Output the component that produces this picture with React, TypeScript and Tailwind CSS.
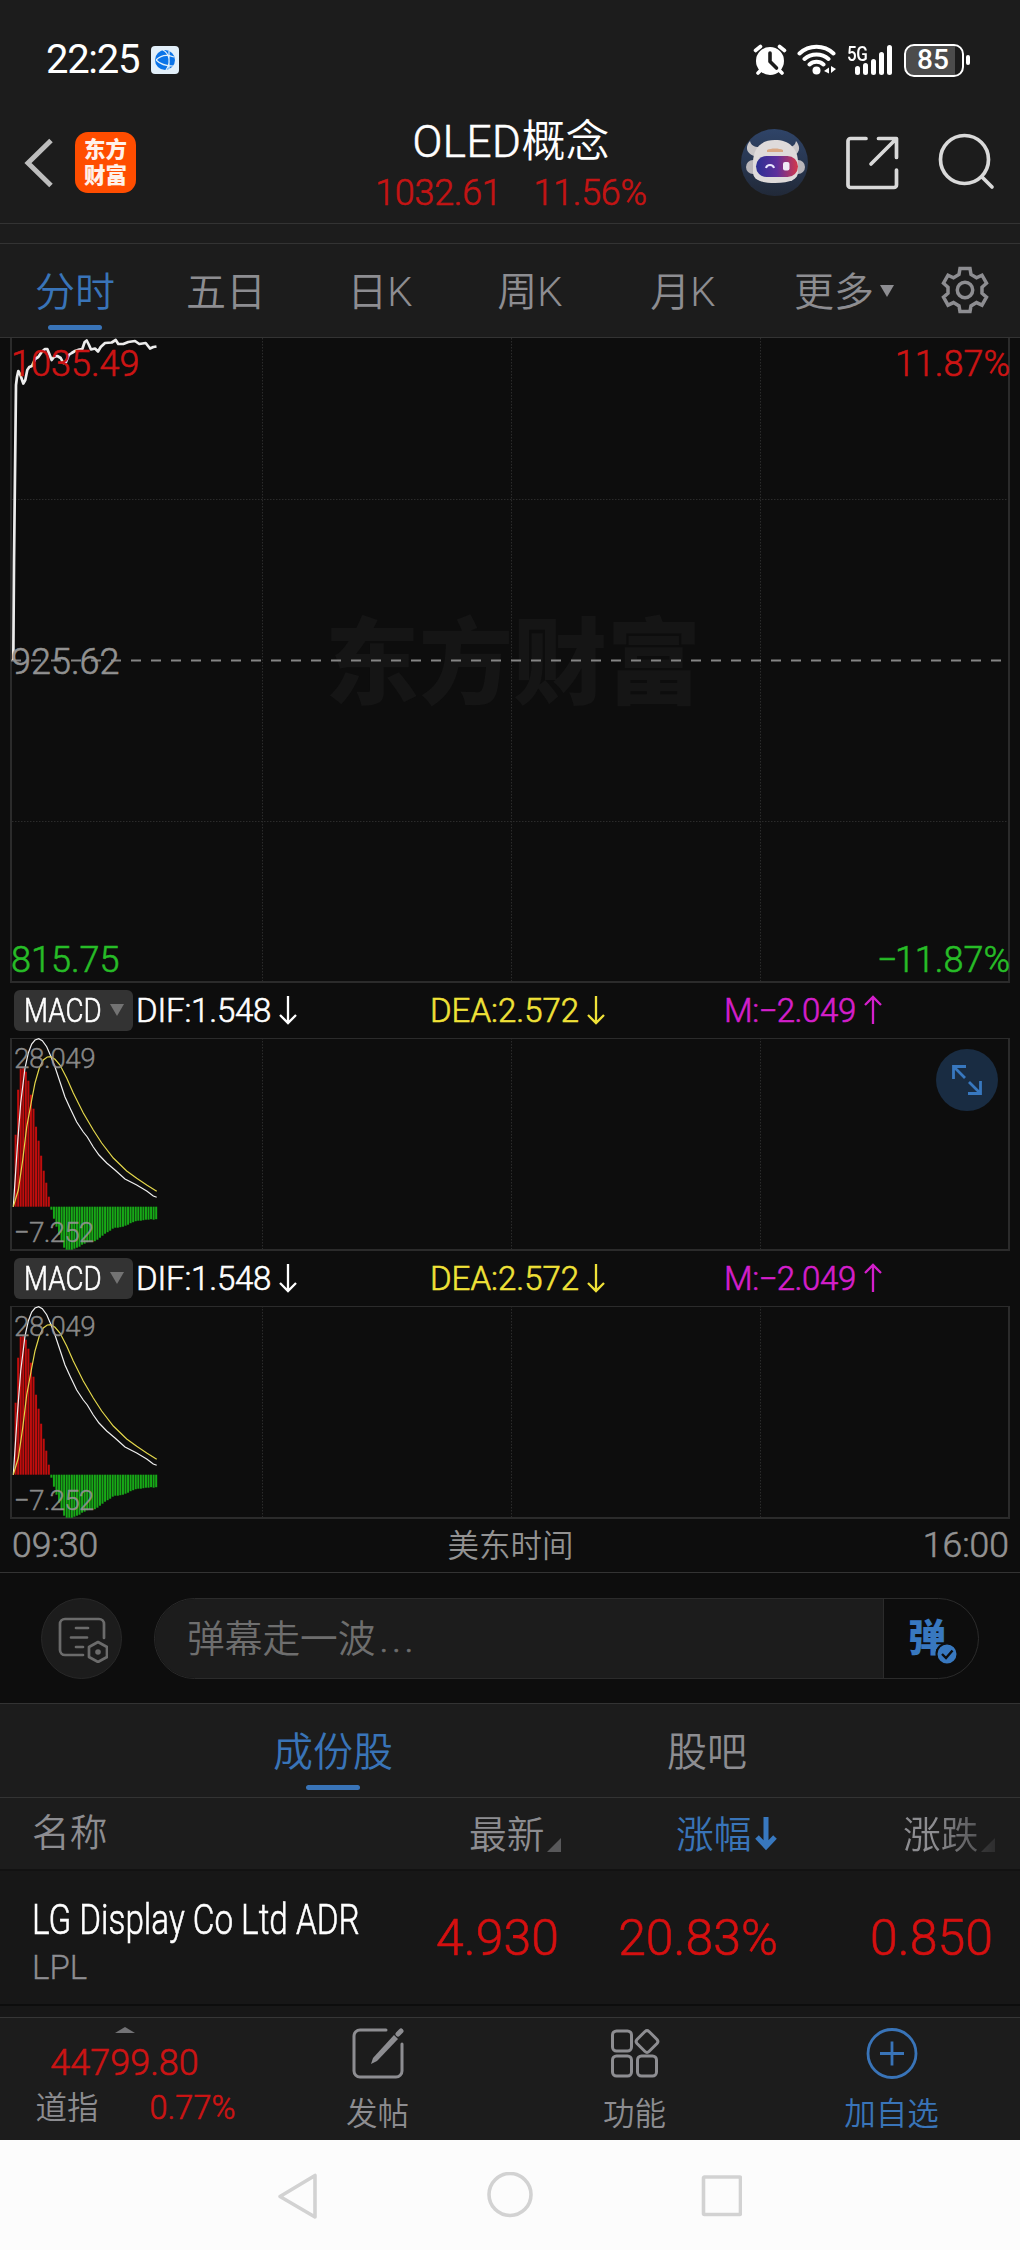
import type { ReactNode } from "react";
import { clsx } from "clsx";

// Stock board detail screen: status bar, quote header, intraday chart with two
// MACD panes, comment bar, constituents table and the bottom action bar.

const PERIODS = [
  { label: "分时", width: "w-[150px]", active: true },
  { label: "五日", width: "w-[152px]" },
  { label: "日K", width: "w-[156px]" },
  { label: "周K", width: "w-[144px]" },
  { label: "月K", width: "w-[162px]" },
];

// Light latin digits read too thin next to the CJK labels, so they get a hairline.
const NUM = "[-webkit-text-stroke:0.6px]";

const PRICE =
  "13.3,322 14,225 16,47 17,39 18.3,33 20,36 23.3,45.5 25.3,42 27.3,32 29.3,29 32,28 35,21 38.3,19 41.7,14 45,11 47.3,11 49.3,16 51.7,22 54,19 57.3,18 60.7,20 63.3,25 66,24 68.7,17 71.7,15 75,13 79.3,11.5 82.3,11 84.7,4 86.7,2.5 89,7 91,11.5 95,10.5 98,13.5 100.7,9 105,5 111.7,4.5 115.7,2 118.3,6 123.3,6 128.3,4 135,3 139.3,6 145.7,5 150,10.5 153.3,9 156.5,8.5";

const DIF =
  "13.3,168.7 17.3,109 20.7,65 25,30 28.3,15 31.7,6 35,2 38.7,0.7 42.3,2.7 46.7,8.7 50.7,18 55,29 60,44 65,59 70,70 76.7,84 83.3,94 87.3,99 93.3,109 99,117 106.7,125 115,132 125,141 136.7,147 146.7,153 153.3,158 156.7,159.3";

const DEA =
  "13.3,168.7 18.3,152 22.7,122 26.7,89 31.7,62 35,45 39.3,30 43.3,22 47.3,19 50.7,18.7 55,21.3 60,27 66.7,40 73.3,55 83.3,75 93.3,92 101.7,105 113.3,120 126.7,133 136.7,140.3 146.7,147 156.7,153.3";

const HIST = [
  72, 117, 138, 138.5, 135, 126, 112, 98, 80, 66, 51, 36, 24, 10, -3, -12, -20, -28, -35, -41, -43, -43,
  -43, -42, -41, -40, -38, -37, -35.5, -34.5, -34.5, -34.5, -33, -31, -29, -27, -25.5, -24, -22, -21, -21,
  -20.5, -20, -19, -18, -16.5, -15.5, -14.5, -14, -14, -13.5, -13, -13, -12.5, -13, -12.5,
];

export default function App() {
  return (
    <div className="flex h-[2250px] w-[1020px] flex-col overflow-hidden bg-[#0d0d0d] font-['Roboto','Noto_Sans_CJK_SC',sans-serif] leading-none font-[350] text-[#8d8d91]">
      <StatusBar />
      <Header />
      <div className="h-5 shrink-0 border-b border-[#333] bg-[#1c1c1c]" />
      <PeriodTabs />
      <PricePane />
      <MacdHeader />
      <MacdPane expandable />
      <MacdHeader />
      <MacdPane />
      <div className="flex h-[54px] shrink-0 items-center justify-between border-b border-[#333] pt-px pr-[11px] pl-3 text-[#929292]">
        <span className={clsx("w-[120px] text-[35.5px]", NUM)}>09:30</span>
        <span className="pt-0.5 text-[31.5px]">美东时间</span>
        <span className={clsx("w-[120px] text-right text-[35.5px]", NUM)}>16:00</span>
      </div>
      <CommentBar />
      <BoardTabs />
      <StockTable />
      <ActionBar />
      <SystemNav />
    </div>
  );
}

function StatusBar() {
  return (
    <div className="flex h-[120px] shrink-0 items-center bg-[#1c1c1c] pl-[46px] text-white">
      <span className="w-[105px] text-[40px] font-normal tracking-[-1.3px]">22:25</span>
      <svg width="28" height="28" viewBox="0 0 28 28">
        <rect width="28" height="28" rx="4" fill="#e3f0fa" />
        <circle cx="14" cy="14" r="10" fill="#0b74e8" />
        <path d="M5 14c5-5 11-6 18-3M5 14c4 4 9 6 17 6M12 4c7 4 8 13 3 20M18 5v18" fill="none" stroke="#e3f0fa" strokeWidth="1.2" />
      </svg>
      <div className="ml-[574px] flex items-center">
        <svg width="34" height="32" viewBox="0 0 34 32">
          <circle cx="17" cy="17" r="14" fill="#fff" />
          <path d="M2.500 6.500 7.500 2.500M26.500 2.500 31.500 6.500M8 26l-3 3M26 26l3 3" stroke="#fff" strokeWidth="3.600" strokeLinecap="round" />
          <path d="M17 9v8.500l6.500 6.500" fill="none" stroke="#1c1c1c" strokeWidth="3.600" strokeLinecap="round" strokeLinejoin="round" />
        </svg>
        <svg className="ml-2.5" width="40" height="32" viewBox="0 0 40 32" fill="none" stroke="#fff" strokeWidth="4" strokeLinecap="round">
          <path d="M2.500 9.500a25 25 0 0 1 34 0M7.500 15a18 18 0 0 1 24 0M12.500 20.500a10.500 10.500 0 0 1 14 0" />
          <circle cx="19.500" cy="26.500" r="4" fill="#fff" stroke="none" />
          <path d="M32 23.500v6l-5-2.500zM34 22v7l5-4z" fill="#fff" stroke="none" />
        </svg>
        <div className="ml-2.5 flex h-[32px] w-[46px]">
          <span className="-mr-[14px] h-4 w-[22px] origin-left scale-x-[0.85] text-[20px] font-medium tracking-[-0.5px]">5G</span>
          <div className="flex items-end gap-[3px] pb-px">
            <i className="h-[9px] w-[5px] rounded-full bg-white" />
            <i className="h-[12px] w-[5px] rounded-full bg-white" />
            <i className="h-[16px] w-[5px] rounded-full bg-white" />
            <i className="h-[23px] w-[5px] rounded-full bg-white" />
            <i className="h-[30px] w-[5px] rounded-full bg-white" />
          </div>
        </div>
        <div className="ml-[11px] flex items-center gap-0.5">
          <div className="flex h-[33px] w-[60px] items-center justify-center rounded-[10px] border-2 border-white bg-[linear-gradient(90deg,#4c4c4c_88%,transparent_88%)] text-[28px] font-medium">
            <span className="pr-0.5">85</span>
          </div>
          <i className="h-[10px] w-1 rounded-full bg-white" />
        </div>
      </div>
    </div>
  );
}

function Header() {
  return (
    <div className="flex h-[104px] shrink-0 border-b border-[#333] bg-[#1c1c1c]">
      <div className="flex w-[340px] pt-3 pl-6">
        <svg className="mt-[6px]" width="30" height="50" viewBox="0 0 30 50" fill="none">
          <path d="M27 2.500 4 25l23 22.500" stroke="#bdbdbd" strokeWidth="5" />
        </svg>
        <div className="ml-[21px] flex size-[61px] flex-col items-center justify-center gap-[5px] rounded-[13px] bg-[#ff4d00] text-[21.5px] font-black text-[#fff1ea]">
          <span>东方</span>
          <span>财富</span>
        </div>
      </div>
      <div className="flex w-[342px] flex-col items-center">
        <h1 className="text-[44px] text-white">
          <span className={clsx("tracking-[0.5px]", NUM)}>OLED</span>概念
        </h1>
        <p className={clsx("mt-[11px] flex gap-[32px] text-[36px] tracking-[-0.3px] text-[#c41414]", NUM)}>
          <span>1032.61</span>
          <span>11.56%</span>
        </p>
      </div>
      <div className="flex flex-1 pt-[9px] pl-[59px]">
        <RobotAvatar />
        <svg className="mt-[6px] ml-[37px]" width="56" height="56" viewBox="0 0 56 56" fill="none" stroke="#d9d9d9" strokeWidth="3.700" strokeLinecap="round" strokeLinejoin="round">
          <path d="M21 3.500H5.500a2.500 2.500 0 0 0-2.500 2.500v44a2.500 2.500 0 0 0 2.500 2.500h43.500a2.500 2.500 0 0 0 2.500-2.500V35M33.500 3.500h18v19M50 5 26 29" />
        </svg>
        <svg className="mt-[4px] ml-[37px]" width="58" height="58" viewBox="0 0 58 58" fill="none" stroke="#d9d9d9" strokeWidth="3.700" strokeLinecap="round">
          <circle cx="26.500" cy="26.500" r="24" />
          <path d="m44 44 10 10" />
        </svg>
      </div>
    </div>
  );
}

function RobotAvatar() {
  return (
    <svg width="67" height="67" viewBox="0 0 67 67">
      <defs>
        <linearGradient id="sky" x1="0" y1="0" x2="0" y2="1">
          <stop offset="0" stopColor="#2f4468" />
          <stop offset="1" stopColor="#212938" />
        </linearGradient>
        <linearGradient id="visor">
          <stop offset="0" stopColor="#2b2f93" />
          <stop offset="0.500" stopColor="#5d2f9c" />
          <stop offset="1" stopColor="#d5394a" />
        </linearGradient>
      </defs>
      <circle cx="33.500" cy="33.500" r="33.500" fill="url(#sky)" />
      <path d="M9 12c-5 6-4 12 4 15l5-9c-5 0-8-2-9-6zM55 12c5 6 4 12-3 15l-5-9c5 0 7-2 8-6z" fill="#c9c6c8" />
      <circle cx="12" cy="38" r="7" fill="#b9b6ba" />
      <circle cx="57" cy="38" r="7" fill="#b9b6ba" />
      <path d="M12 34c0-15 8-23 22-23s23 8 23 23v9c0 7-7 11-23 11s-22-4-22-11z" fill="#dedada" />
      <path d="M26 21c4-2 12-2 16 0v2H26z" fill="#d9a783" />
      <rect x="15" y="27" width="42" height="21" rx="10.500" fill="url(#visor)" />
      <path d="M25 39c1-4 7-4 8 0" fill="none" stroke="#e8e6ff" strokeWidth="2" />
      <rect x="42" y="33" width="6.500" height="8.500" rx="2" fill="#efeaf5" />
    </svg>
  );
}

function PeriodTabs() {
  return (
    <div className="flex h-[94px] shrink-0 border-b border-[#333] bg-[#1c1c1c] text-[40px]">
      {PERIODS.map((p) => (
        <div key={p.label} className={clsx("flex flex-col items-center pt-[29px]", p.width, p.active && "text-[#3974b8]")}>
          <span>{p.label}</span>
          {p.active && <i className="mt-[12px] h-[5px] w-[54px] rounded-full bg-[#3974b8]" />}
        </div>
      ))}
      <div className="flex items-start pt-[29px] pl-[30px]">
        <span>更多</span>
        <svg className="mt-[12px] ml-[6px]" width="14" height="12" viewBox="0 0 14 12">
          <path d="M0 0h14L7 12z" fill="#8d8d91" />
        </svg>
      </div>
      <svg className="mt-[22px] ml-[47px]" width="48" height="48" viewBox="0 0 48 48" fill="none" stroke="#8d8d91" strokeWidth="3.500">
        <path d="M19 2.500h10l1 6 5.500 3.300 5.500-2.600 4.500 8-4.500 4v6l4.500 4-4.500 8-5.500-2.600-5.500 3.300-1 5.600H19l-1-5.600-5.500-3.300L7 39.200l-4.500-8 4.500-4v-6l-4.500-4 4.500-8 5.500 2.600L18 8.500z" />
        <circle cx="24" cy="24" r="7.700" />
      </svg>
    </div>
  );
}

function GridLines({ height }: { height: number }) {
  return (
    <g stroke="#2b2b2b" strokeWidth="1" strokeDasharray="1.500 1.500">
      {[262.5, 511.5, 760.5].map((x) => (
        <path key={x} d={`M${x} 0V${height}`} />
      ))}
    </g>
  );
}

function PricePane() {
  return (
    <div className="relative h-[645px] shrink-0">
      <div className="absolute top-[280px] left-[325px] text-[94px] font-black text-[#151515]">东方财富</div>
      <svg className="absolute inset-0" width="1020" height="645" viewBox="0 0 1020 645" fill="none">
        <GridLines height={643} />
        <path d="M12 161.500H1008M12 483.500H1008" stroke="#2b2b2b" strokeDasharray="1.500 1.500" />
        <path d="M11 0V644H1009V0" stroke="#2b2b2b" strokeWidth="2" />
        <path d="M11 322.500H1004" stroke="#858585" strokeWidth="2" strokeDasharray="10 10" />
        <polyline points={PRICE} stroke="#ececec" strokeWidth="2.700" strokeLinejoin="round" />
      </svg>
      <div className={clsx("absolute inset-0 flex flex-col justify-between pt-[8px] pr-[10px] pb-[5px] pl-[11px] text-[36px]", NUM)}>
        <div className="flex justify-between text-[#cc1414]">
          <span>1035.49</span>
          <span>11.87%</span>
        </div>
        <span className="text-[#929292]">925.62</span>
        <div className="flex justify-between text-[#27bd27]">
          <span>815.75</span>
          <span className="flex">
            <Minus />
            11.87%
          </span>
        </div>
      </div>
    </div>
  );
}

function Arrow({ up = false }: { up?: boolean }) {
  return (
    <svg
      className={clsx("ml-2", up && "rotate-180")}
      width="18"
      height="30"
      viewBox="0 0 18 30"
      fill="none"
      stroke="currentColor"
      strokeWidth="2.300"
    >
      <path d="M9 1v27M1 20l8 8 8-8" />
    </svg>
  );
}

function MacdHeader() {
  return (
    <div className={clsx("flex h-[55px] shrink-0 items-center pb-px pl-3.5 text-[33px]", NUM)}>
      <div className="flex h-[41px] w-[119px] items-center rounded-[6px] bg-[#333] pl-[10px] text-white">
        <span className="w-[86px] origin-left scale-x-[0.84]">MACD</span>
        <svg width="14" height="12" viewBox="0 0 14 12">
          <path d="M0 0h14L7 12z" fill="#737373" />
        </svg>
      </div>
      <div className="flex w-[293px] items-center pl-[3px] tracking-[-0.2px] text-white">
        DIF:1.548
        <Arrow />
      </div>
      <div className="flex w-[298px] items-center pl-1 text-[#f0e238]">
        DEA:2.572
        <Arrow />
      </div>
      <div className="flex items-center tracking-[-0.4px] text-[#d41fcb]">
        M:
        <Minus />
        2.049
        <Arrow up />
      </div>
    </div>
  );
}

function Minus() {
  return <span className="inline-block w-[18px]">−</span>;
}

function MacdPane({ expandable = false }: { expandable?: boolean }) {
  return (
    <div className="relative h-[213px] shrink-0">
      <svg className="absolute inset-0" width="1020" height="213" viewBox="0 0 1020 213" fill="none">
        <GridLines height={211} />
        <path d="M11 0.500H1009" stroke="#2b2b2b" />
        <path d="M11 0V212H1009V0" stroke="#2b2b2b" strokeWidth="2" />
        {HIST.map((v, i) => (
          <rect
            key={i}
            x={14.6 + i * 2.556}
            y={v > 0 ? 168.7 - v : 168.7}
            width="2"
            height={Math.abs(v)}
            fill={v > 0 ? "#c00d0d" : "#17a817"}
          />
        ))}
        <polyline points={DIF} stroke="#f0f0f0" strokeWidth="1.200" />
        <polyline points={DEA} stroke="#e2d64a" strokeWidth="1.200" />
      </svg>
      <div className="absolute inset-y-0 left-[14px] flex flex-col justify-between pt-[7px] pb-[4px] text-[28px] text-[#949494]/90 [-webkit-text-stroke:0.4px]">
        <span className="tracking-[-0.5px]">28.049</span>
        <span className="tracking-[-0.9px]">−7.252</span>
      </div>
      {expandable && (
        <div className="absolute top-[11px] right-[22px] flex size-[62px] items-center justify-center rounded-full bg-[#192c42]">
          <svg width="30" height="30" viewBox="0 0 30 30" fill="none" stroke="#3878bf" strokeWidth="2.800">
            <path d="M14 1.500H1.500V14M1.500 1.500 13 13M16 28.500h12.500V16M28.500 28.500 17 17" />
          </svg>
        </div>
      )}
    </div>
  );
}

function CommentBar() {
  return (
    <div className="flex h-[131px] shrink-0 items-center border-b border-[#333] pl-[41px]">
      <div className="flex size-[81px] items-center justify-center rounded-full border border-[#282828] bg-[#1c1c1c]">
        <svg className="mt-[3px] ml-[3px]" width="50" height="46" viewBox="0 0 50 46" fill="none" stroke="#6b6b6b" strokeWidth="2.700" strokeLinecap="round">
          <path d="M25 38H7a5 5 0 0 1-5-5V7a5 5 0 0 1 5-5h34a5 5 0 0 1 5 5v14M18 11h12M13 20.500h16M18 30h7" />
          <path d="m40 25 9 5v10l-9 5-9-5V30z" strokeLinejoin="round" />
          <circle cx="40" cy="35" r="2.800" fill="#6b6b6b" stroke="none" />
        </svg>
      </div>
      <div className="ml-8 flex h-[81px] w-[825px] overflow-hidden rounded-full border border-[#2b2b2b]">
        <div className="flex w-[729px] items-center border-r border-[#2b2b2b] bg-[#1c1c1c] pt-1 pl-[32px] text-[37.7px] text-[#6e6e6e]">
          弹幕走一波<span className={clsx("pl-1 tracking-[3.500px]", NUM)}>...</span>
        </div>
        <div className="relative flex items-center pl-6 text-[38px] font-black text-[#3878bf]">
          弹
          <svg className="absolute top-[43px] left-[51px]" width="24" height="24" viewBox="0 0 24 24">
            <circle cx="12" cy="12" r="10.500" fill="#3878bf" stroke="#0d0d0d" strokeWidth="2" />
            <path d="m7 12 4 4 6.500-7.500" fill="none" stroke="#0d0d0d" strokeWidth="2.400" />
          </svg>
        </div>
      </div>
    </div>
  );
}

function BoardTabs() {
  return (
    <div className="flex h-[94px] shrink-0 justify-center border-b border-[#333] bg-[#1c1c1c] pl-5 text-[40px]">
      <div className="flex w-[374px] flex-col items-center pt-[29px] text-[#3974b8]">
        <span>成份股</span>
        <i className="mt-[12px] h-[5px] w-[54px] rounded-full bg-[#3974b8]" />
      </div>
      <div className="flex w-[374px] flex-col items-center pt-[29px]">
        <span>股吧</span>
      </div>
    </div>
  );
}

function Corner() {
  return (
    <svg className="mt-[20px] ml-[3px]" width="14" height="14" viewBox="0 0 14 14">
      <path d="M14 0v14H0z" fill="#58585a" />
    </svg>
  );
}

function StockTable() {
  return (
    <div className="shrink-0 bg-[#171717]">
      <div className="flex h-[73px] items-center border-b-2 border-[#121212] bg-[#1c1c1c] pt-[4px] pl-[32px] text-[37.7px]">
        <span className="w-[437px] pb-[3px]">名称</span>
        <span className="flex w-[207px] items-center">
          最新
          <Corner />
        </span>
        <span className="flex w-[227px] items-center text-[#3974b8]">
          涨幅
          <svg className="mb-[3px] ml-1" width="22" height="34" viewBox="0 0 22 34" fill="none" stroke="#3878bf" strokeWidth="5">
            <path d="M11 0v30M2 20l9 9.500 9-9.500" />
          </svg>
        </span>
        <span className="flex items-center [mask-image:linear-gradient(90deg,#000_35%,rgba(0,0,0,0.3))]">
          涨跌
          <Corner />
        </span>
      </div>
      <div className="flex h-[135px] items-center border-b-2 border-[#0d0d0d] pl-[32px] text-[50px] text-[#d51010]">
        <div className={clsx("w-[328px] pt-[6px] whitespace-nowrap text-white", NUM)}>
          <div className="origin-left scale-x-[0.773] text-[43px]">LG Display Co Ltd ADR</div>
          <div className="mt-[10px] text-[33px] text-[#8d8d91] [-webkit-text-stroke:0.3px]">LPL</div>
        </div>
        <div className={clsx("flex text-right", NUM)}>
          <span className="w-[199px]">4.930</span>
          <span className="w-[219px]">20.83%</span>
          <span className="w-[215px]">0.850</span>
        </div>
      </div>
      <div className="h-[11px]" />
    </div>
  );
}

function Action({ label, className, children }: { label: string; className?: string; children: ReactNode }) {
  return (
    <div className={clsx("flex w-[257px] flex-col items-center pt-2", className)}>
      {children}
      <span className="mt-[19px] text-[31.5px]">{label}</span>
    </div>
  );
}

function ActionBar() {
  return (
    <div className="flex h-[123px] shrink-0 border-t border-[#363636] bg-[#1c1c1c]">
      <div className="flex w-[249px] flex-col items-center pt-[9px] text-[#cc1414]">
        <svg width="20" height="6" viewBox="0 0 20 6">
          <path d="M0 6 10 0l10 6z" fill="#737376" />
        </svg>
        <span className={clsx("mt-[12px] text-[36px]", NUM)}>44799.80</span>
        <div className="mt-[11px] flex items-center pl-[22px] text-[32.5px]">
          <span className="w-[114px] text-[31.5px] text-[#8d8d91]">道指</span>
          <span className={NUM}>0.77%</span>
        </div>
      </div>
      <Action label="发帖">
        <svg width="54" height="54" viewBox="0 0 54 54" fill="none" stroke="#8d8d91" strokeWidth="3" strokeLinecap="round">
          <path d="M35 4H9a6 6 0 0 0-6 6v35a6 6 0 0 0 6 6h36a6 6 0 0 0 6-6V18" />
          <path d="m22 32 21-23 4 4-21 22-6 3z" fill="#8d8d91" stroke="none" />
          <path d="m47 8 3-3" strokeWidth="5" />
        </svg>
      </Action>
      <Action label="功能">
        <svg width="54" height="54" viewBox="0 0 54 54" fill="none" stroke="#8d8d91" strokeWidth="3">
          <rect x="4.500" y="5" width="19" height="20" rx="4" />
          <rect x="4.500" y="30" width="19" height="20" rx="4" />
          <rect x="29.500" y="30" width="19" height="20" rx="4" />
          <path d="M37 5.500a3 3 0 0 1 4 0l8 8a3 3 0 0 1 0 4l-8 8a3 3 0 0 1-4 0l-8-8a3 3 0 0 1 0-4z" />
        </svg>
      </Action>
      <Action label="加自选" className="text-[#3974b8]">
        <svg width="54" height="54" viewBox="0 0 54 54" fill="none" stroke="currentColor" strokeWidth="2.800">
          <circle cx="27" cy="27.500" r="24" />
          <path d="M27 15.500v24M15 27.500h24" />
        </svg>
      </Action>
    </div>
  );
}

function SystemNav() {
  return (
    <div className="flex flex-1 items-start bg-[#fcfcfc] pt-8 pl-[276px]">
      <svg width="466" height="48" viewBox="0 0 466 48" fill="none" stroke="#d2d2d2" strokeWidth="3.600" strokeLinejoin="round">
        <path d="M39 3.500v41.500L4 24.500z" />
        <circle cx="234" cy="22.500" r="21" />
        <rect x="427.500" y="5" width="37" height="37.500" rx="1" />
      </svg>
    </div>
  );
}
